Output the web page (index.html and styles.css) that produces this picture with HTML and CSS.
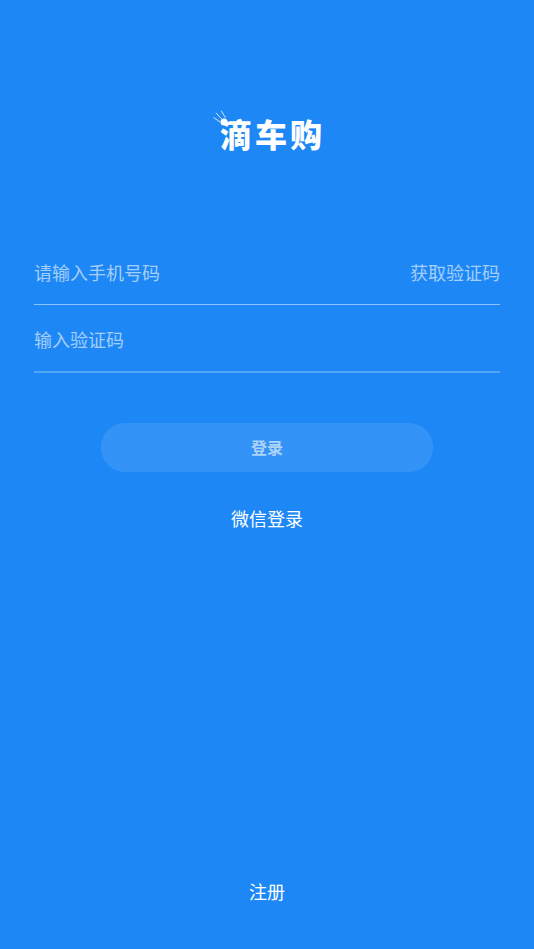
FILE: index.html
```html
<!DOCTYPE html>
<html lang="zh-CN">
<head>
<meta charset="utf-8">
<meta name="viewport" content="width=device-width, initial-scale=1">
<title>滴车购</title>
<link rel="stylesheet" href="styles.css">
</head>
<body>
<main class="page">
  <h1 class="logo">
    <svg class="logo-spark" viewBox="0 0 16 16" aria-hidden="true">
      <path d="M.5 7.500 7 12M3 2.800l6 6.500M8.200 .8l4.300 7" />
      <circle cx="11" cy="12" r="3.500" />
    </svg>
    <span>滴</span><span>车</span><span>购</span>
  </h1>
  <form class="form">
    <div class="field">
      <input class="input" type="tel" placeholder="请输入手机号码" aria-label="手机号码">
      <button class="code" type="button">获取验证码</button>
    </div>
    <div class="field field-soft">
      <input class="input" type="text" placeholder="输入验证码" aria-label="验证码">
    </div>
    <button class="submit" type="submit">登录</button>
  </form>
  <a class="link" href="#wechat">微信登录</a>
  <a class="link register" href="#register">注册</a>
</main>
</body>
</html>
```
FILE: styles.css
```css
* {
  box-sizing: border-box;
}

body {
  margin: 0;
  background: #1d87f5;
  color: #fff;
  font: 18px/26px "Noto Sans CJK SC", sans-serif;
}

.page {
  display: flex;
  flex-direction: column;
  align-items: center;
  min-height: 100vh;
  padding: 112px 34px 45px;
}

.logo {
  position: relative;
  display: flex;
  gap: 3px;
  margin: 0;
  padding-left: 8px;
  font-size: 32px;
  font-weight: 900;
  line-height: 42px;
}

.logo-spark {
  position: absolute;
  top: -2px;
  left: 1px;
  width: 16px;
  height: 16px;
  fill: #fff;
}

.logo-spark path {
  fill: none;
  stroke: #fff;
  stroke-width: 0.8;
}

.form {
  display: flex;
  flex-direction: column;
  align-items: center;
  width: 100%;
  margin-top: 84px;
}

.field {
  display: flex;
  align-items: center;
  width: 100%;
  height: 67px;
  padding-top: 2px;
  border-bottom: 1px solid rgba(255, 255, 255, 0.5);
}

.field-soft {
  height: 68px;
  border-bottom: 2px solid rgba(255, 255, 255, 0.25);
}

.input,
.code,
.submit {
  padding: 0;
  border: 0;
  outline: 0;
  background: none;
  color: rgba(255, 255, 255, 0.6);
  font: inherit;
}

.input {
  flex: 1;
  min-width: 0;
}

.input::placeholder {
  color: rgba(255, 255, 255, 0.6);
}

.submit {
  width: 332px;
  max-width: 100%;
  height: 49px;
  margin-top: 50px;
  padding-bottom: 2px;
  border-radius: 24px;
  background: rgba(255, 255, 255, 0.1);
  font-size: 16px;
  font-weight: 700;
}

.link {
  margin-top: 33px;
  color: #fff;
  text-decoration: none;
}

.register {
  margin-top: auto;
}
```
